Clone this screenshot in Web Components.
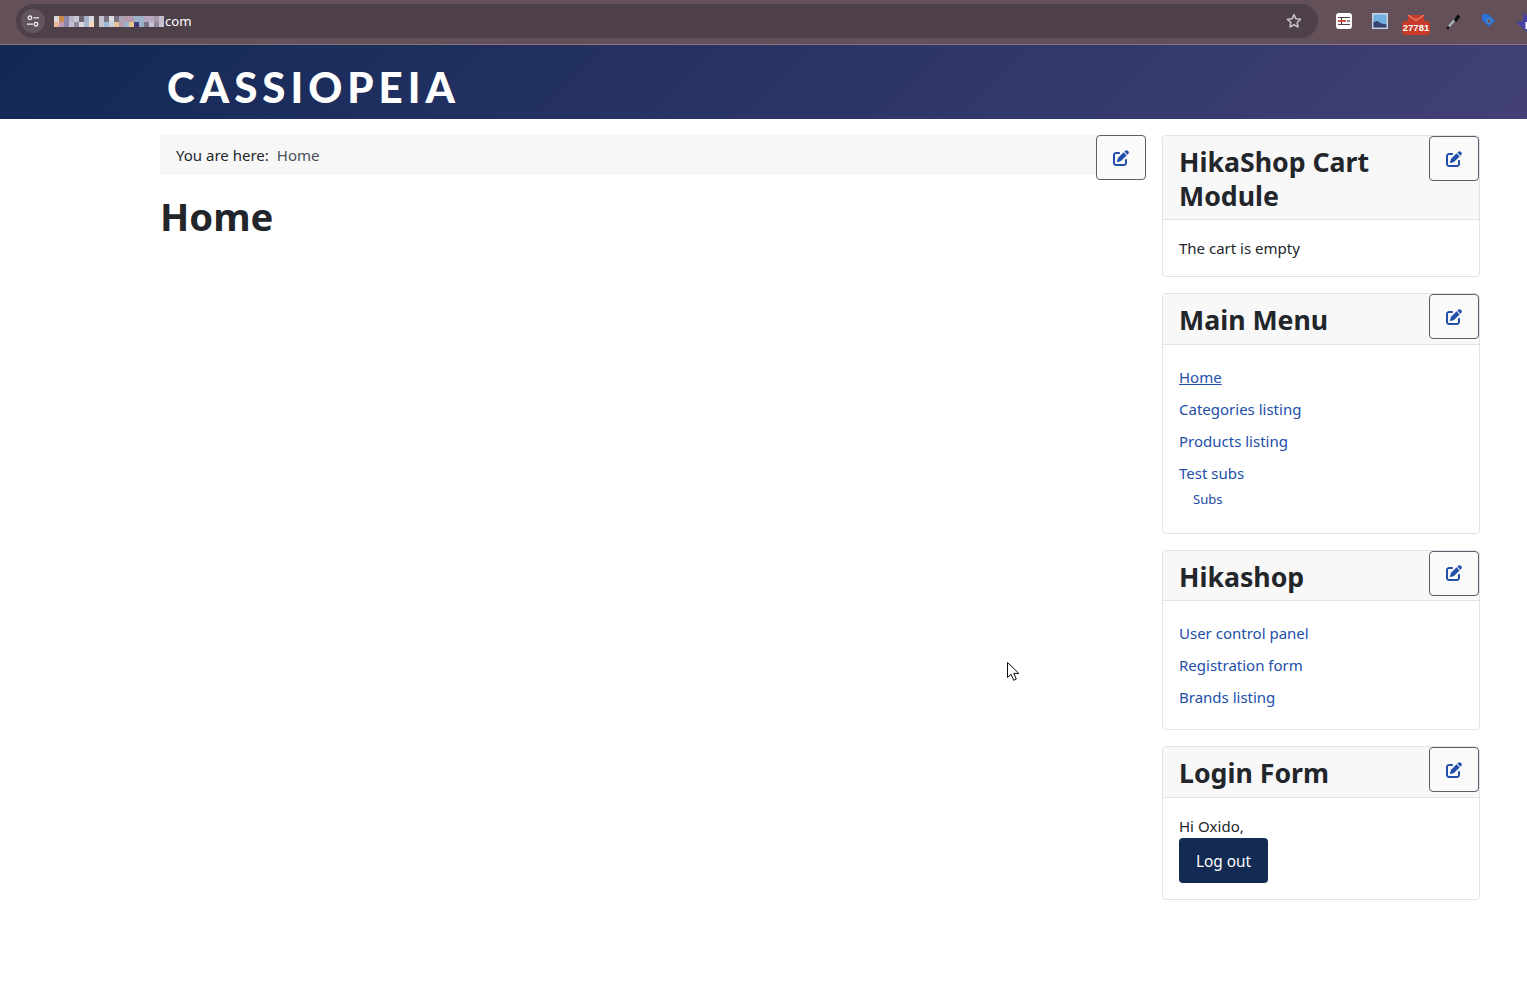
<!DOCTYPE html>
<html lang="en"><head><meta charset="utf-8"><title>Cassiopeia</title>
<style>
html,body{margin:0;background:#fff}
body{font:15px/24px "Noto Sans",sans-serif;color:#22262a;height:990px;overflow:hidden;position:relative}
</style></head><body>
<chrome-bar></chrome-bar>
<site-header>CASSIOPEIA</site-header>
<page-layout>
  <main-area></main-area>
  <side-card slot="side" heading="HikaShop Cart Module"><span>The cart is empty</span></side-card>
  <side-card slot="side" heading="Main Menu"><menu-list items="Home*|Categories listing|Products listing|Test subs" sub="Subs"></menu-list></side-card>
  <side-card slot="side" heading="Hikashop"><menu-list items="User control panel|Registration form|Brands listing" flush></menu-list></side-card>
  <side-card slot="side" heading="Login Form"><login-box></login-box></side-card>
</page-layout>
<mouse-cursor></mouse-cursor>
<script>
const PEN='M471.6 21.7c-21.9-21.9-57.3-21.9-79.2 0L362.3 51.7l97.9 97.9 30.1-30.1c21.9-21.9 21.9-57.3 0-79.2L471.6 21.7zm-299.2 220c-6.1 6.1-10.8 13.6-13.5 21.9l-29.6 88.8c-2.9 8.6-.6 18.1 5.8 24.6s15.9 8.7 24.6 5.8l88.8-29.6c8.2-2.7 15.7-7.4 21.9-13.5L437.7 172.3 339.7 74.3 172.4 241.7zM96 64C43 64 0 107 0 160V416c0 53 43 96 96 96H352c53 0 96-43 96-96V320c0-17.7-14.3-32-32-32s-32 14.3-32 32v96c0 17.7-14.3 32-32 32H96c-17.7 0-32-14.3-32-32V160c0-17.7 14.3-32 32-32h96c17.7 0 32-14.3 32-32s-14.3-32-32-32H96z';
function def(name,html,setup){customElements.define(name,class extends HTMLElement{connectedCallback(){if(this.shadowRoot)return;const r=this.attachShadow({mode:'open'});r.innerHTML=typeof html==='function'?html(this):html;setup&&setup(r,this)}})}
const top1=['#dcd6da','#c88a48','#8c86a8','#b9b4c8','#c8c6d2','#6f6470','#a6b4ca','#d8d8de','#5a4b53','#c6c4d0','#7d7480','#dcdce2','#7a7384','#a9a3b5','#b89ab0','#b89ab0','#9db0ca','#9db0ca','#b9a9c0','#b9a9c0','#a59ab0','#c6bccb'];
const bot1=['#e8b898','#c09ab0','#8c86a8','#c2c0d0','#8e8a9c','#d8d8de','#a6b8cc','#fad8bc','#5a4b53','#c4c2ce','#9ab8d4','#c8d0dc','#e6c49a','#b89ab0','#9ab4cc','#e8c48c','#3f3a78','#9db0ca','#7a7384','#c6c4d0','#8f8898','#c6c4d0'];
def('chrome-bar',`<style>
:host{display:flex;align-items:flex-start;height:44px;background:#635058;border-bottom:1px solid #86747c;position:relative}
.pill{margin:4px 0 0 16px;width:1302px;height:34px;border-radius:17px;background:#4e4048;display:flex;align-items:center;box-sizing:border-box;padding:0 15px 0 5px}
.tune{width:24px;height:24px;border-radius:50%;background:#63555d;display:grid;place-items:center;flex:none}
.mos{display:grid;grid-template-columns:repeat(22,5px);grid-auto-rows:5.5px;margin:1px 0 0 9px;flex:none}
.url{font:13.2px/1 "Noto Sans",sans-serif;color:#fff;margin-left:1px;position:relative;top:1px}
.star{margin-left:auto}
.ext{position:absolute;left:0;top:0;height:44px;width:100%;overflow:hidden;pointer-events:none}
.ext svg,.ext div{position:absolute}
.badge{left:1402px;top:21px;width:28px;height:14px;background:#c93c2c;border-radius:4px;color:#fff;font:700 9.5px/14px "Liberation Sans",sans-serif;text-align:center}
</style>
<div class="pill"><div class="tune"><svg width="16" height="16" viewBox="0 0 16 16" fill="none" stroke="#f1ecee" stroke-width="1.3"><circle cx="5" cy="4.8" r="1.8"/><path d="M8.5 4.8h5.5M2 11.2h6"/><circle cx="11" cy="11.2" r="1.8"/></svg></div>
<div class="mos" id="m"></div><span class="url">com</span>
<svg class="star" width="18" height="18" viewBox="0 0 24 24" fill="none" stroke="#c9c0c5" stroke-width="2"><path d="M12 3.5l2.6 5.6 6.1.7-4.5 4.2 1.2 6L12 17l-5.4 3 1.2-6-4.5-4.2 6.1-.7z" stroke-linejoin="round"/></svg></div>
<div class="ext">
<svg style="left:1336px;top:13px" width="16" height="16" viewBox="0 0 16 16"><rect width="16" height="16" rx="3" fill="#fff"/><path d="M2 4.5h12M2 11.5h12M5.5 4.5v7" stroke="#4e4048" stroke-width="1.2"/><path d="M2 8h8" stroke="#d0402f" stroke-width="1.8"/><path d="M11 8h3" stroke="#4e4048" stroke-width="1.2"/></svg>
<svg style="left:1372px;top:13px" width="16" height="16" viewBox="0 0 16 16"><rect width="16" height="16" fill="#c9d2de"/><rect x="1.5" y="1.5" width="13" height="13" fill="#6fb0e0"/><path d="M1.5 9l4-1 4 2.5 5 1v3h-13z" fill="#3b4470"/></svg>
<svg style="left:1408px;top:15px" width="16" height="7" viewBox="0 0 16 7"><path d="M0 0h16v7H0z" fill="#c93c2c"/><path d="M0 0l8 5.5L16 0" fill="none" stroke="#e4a08e" stroke-width="1"/></svg>
<div class="badge">27781</div>
<svg style="left:1446px;top:13px" width="15" height="17" viewBox="0 0 15 17"><path d="M2.5 14L9 6.5" stroke="#a9b4c0" stroke-width="2.2"/><path d="M1 16l2-2.4" stroke="#111" stroke-width="2"/><path d="M9 8L13 2.5" stroke="#111" stroke-width="3.4"/></svg>
<svg style="left:1481px;top:13px" width="15" height="15" viewBox="0 0 15 15"><path d="M1 1h6l7 6.5-6 6.5L1 7z" fill="#2c6fd6"/><circle cx="8" cy="8" r="2.4" fill="#635058" stroke="#4da0ee"/></svg>
<svg style="left:1516px;top:13px" width="14" height="21" viewBox="0 0 14 21"><path d="M7 0l7 5v10H7l-7-5 7-2z" fill="#4842a8"/><circle cx="13" cy="13" r="6" fill="#4842a8"/><rect x="9.5" y="9" width="3" height="7" fill="#fff"/></svg>
</div>`,r=>{const m=r.getElementById('m');[...top1,...bot1].forEach(c=>{const s=document.createElement('span');s.style.background=c;m.append(s)})});
def('site-header',`<style>:host{display:flex;align-items:center;height:74px;padding-left:167px;box-sizing:border-box;background:linear-gradient(135deg,#112855 0%,#424077 100%)}
span{font:900 42px/1 Lato,sans-serif;color:#fff;letter-spacing:5px;position:relative;top:5px}</style><span><slot></slot></span>`);
def('page-layout',`<style>:host{display:flex;gap:16px;padding:16px 47px 0 160px}
.m{flex:none;width:986px}.s{flex:none;width:318px;display:flex;flex-direction:column;gap:16px}</style>
<div class="m"><slot></slot></div><div class="s"><slot name="side"></slot></div>`);
def('edit-button',`<style>:host{display:grid;place-items:center;width:50px;height:45px;box-sizing:border-box;background:#fafafa;border:1px solid #5b6068;border-radius:4px;position:absolute}
svg{width:16px;height:16px;fill:#224faa}</style><svg viewBox="0 0 512 512"><path d="${PEN}"/></svg>`);
def('main-area',`<style>:host{display:block;position:relative}
.bc{background:#f7f7f7;height:40px;padding:0 16px;display:flex;align-items:center;color:#22262a;font-size:15px}
.bc b{font-weight:400;margin-right:8px}.bc span{color:#495057}
h1{font:700 38.3px/48px "Noto Sans",sans-serif;margin:17px 0 0;color:#22262a}
edit-button{right:0;top:0}</style>
<nav class="bc"><b>You are here:</b><span>Home</span></nav><edit-button></edit-button><h1>Home</h1>`);
def('side-card',h=>`<style>:host{display:block;position:relative;border:1px solid #dfe3e7;border-radius:4px;background:#fff;overflow:hidden}
header{background:#f8f8f9;border-bottom:1px solid #dfe3e7;padding:8px 16px}
h3{margin:0;font:700 26.7px/33.6px "Noto Sans",sans-serif;color:#22262a;padding-right:80px;position:relative;top:1px}
.b{padding:16px;color:#22262a}
edit-button{right:0;top:0}</style>
<header><h3>${h.getAttribute('heading')}</h3></header><edit-button></edit-button><div class="b"><slot></slot></div>`);
def('menu-list',h=>{const sub=h.getAttribute('sub');
return `<style>:host{display:block}ul{list-style:none;margin:0;padding:0}
li{padding:4px 0}a{color:#224faa;text-decoration:none}a.c{text-decoration:underline}
.sub{padding:0 0 7px 14px;font-size:13.1px;line-height:20px}.sub li{padding:0 0 1px}</style>
<ul>${h.getAttribute('items').split('|').map(t=>{const c=t.endsWith('*');t=t.replace('*','');return `<li><a href="#" class="${c?'c':''}">${t}</a></li>`}).join('')}</ul>
${sub?`<ul class="sub"><li><a href="#">${sub}</a></li></ul>`:''}`});
def('login-box',`<style>:host{display:block}button{display:block;width:89px;height:45px;padding:2px 0 0;border:0;border-radius:4px;background:#132a53;color:#fff;font:15.4px "Noto Sans",sans-serif}</style>
<div>Hi Oxido,</div><button>Log out</button>`);
def('mouse-cursor',`<style>:host{position:absolute;left:1007px;top:662px;display:block;width:13px;height:20px}</style>
<svg width="13" height="20" viewBox="0 0 13 20"><path d="M.5.5v15l3.6-3.2 2.5 6 2.7-1.2-2.5-5.7h5z" fill="#fff" stroke="#111" stroke-width="1"/></svg>`);
</script>
</body></html>
